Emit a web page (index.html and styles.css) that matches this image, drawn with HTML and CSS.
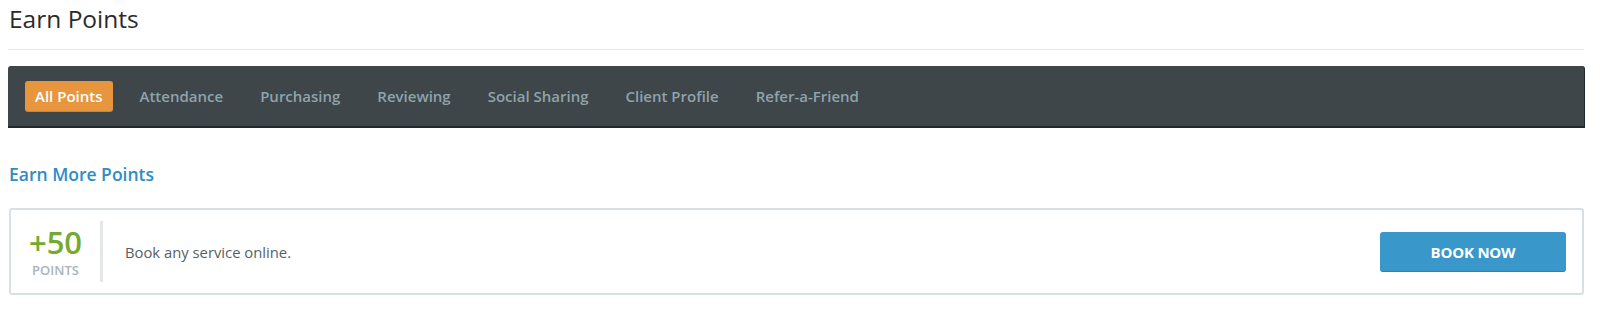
FILE: index.html
```html
<!DOCTYPE html>
<html lang="en">

<head>
  <meta charset="UTF-8">
  <meta name="viewport" content="width=device-width, initial-scale=1.0">
  <title>Earn Points</title>
  <link rel="stylesheet" href="styles.css">
</head>

<body>
  <div class="page">
    <!-- Page heading -->
    <div class="page-header">
      <h1>Earn Points</h1>
    </div>

    <!-- Category filter bar -->
    <div class="filter-bar">
      <a class="filter active" href="#">All Points</a>
      <a class="filter" href="#">Attendance</a>
      <a class="filter" href="#">Purchasing</a>
      <a class="filter" href="#">Reviewing</a>
      <a class="filter" href="#">Social Sharing</a>
      <a class="filter" href="#">Client Profile</a>
      <a class="filter" href="#">Refer-a-Friend</a>
    </div>

    <h2 class="section-title">Earn More Points</h2>

    <!-- One way to earn points -->
    <div class="earn-card">
      <div class="earn-points">
        <span class="amount">+50</span>
        <span class="label">Points</span>
      </div>
      <p class="earn-text">Book any service online.</p>
      <button class="book-now">Book Now</button>
    </div>
  </div>
</body>

</html>
```

FILE: styles.css
```css
/* Base page */
body {
  margin: 0;
  font-family: 'Open Sans', sans-serif;
  background: #fff;
  color: #333;
}

.page {
  padding: 0 16px 0 8px;
}

/* Heading with thin rule under it */
.page-header {
  padding: 6px 0 17px 1px;
  border-bottom: 1px solid #e6e6e6;
}

.page-header h1 {
  margin: 0;
  font-size: 24.5px;
  font-weight: 400;
  line-height: 26px;
  color: #2b2b2b;
}

/* Dark filter bar */
.filter-bar {
  margin-top: 16px;
  display: flex;
  align-items: center;
  gap: 17px;
  height: 60px;
  padding: 0 17px;
  background: #3e4649;
  border-radius: 3px 3px 0 0;
  border-bottom: 2px solid #1f292c;
  box-shadow: 1px 0 0 #1f292c;
  box-sizing: content-box;
}

.filter {
  display: block;
  padding: 0 10px;
  height: 31px;
  line-height: 31px;
  font-size: 15px;
  font-weight: 600;
  color: #8fa3ad;
  text-decoration: none;
  border-radius: 3px;
}

.filter.active {
  background: #e8963e;
  color: #fff;
  box-shadow: inset 0 -1px 0 rgba(0, 0, 0, 0.12);
}

/* Section title */
.section-title {
  margin: 35px 0 0 1px;
  font-size: 17.5px;
  font-weight: 600;
  line-height: 22px;
  color: #2e8dc2;
}

/* Card with points, text and button */
.earn-card {
  margin: 23px 0 0 1px;
  display: flex;
  align-items: center;
  padding: 11px 16px 11px 0;
  border: 2px solid #d9e0e4;
  border-radius: 3px;
}

.earn-points {
  width: 89px;
  height: 61px;
  display: flex;
  flex-direction: column;
  align-items: center;
  justify-content: center;
  border-right: 3px solid #e3e7e9;
}

.amount {
  font-size: 31px;
  font-weight: 600;
  line-height: 32px;
  color: #72ab2e;
}

.label {
  font-size: 13px;
  font-weight: 600;
  line-height: 16px;
  text-transform: uppercase;
  color: #a9b4ba;
  margin-top: 4px;
}

.earn-text {
  flex: 1;
  margin: 0 0 0 22px;
  font-size: 14.8px;
  color: #565f64;
}

.book-now {
  width: 186px;
  height: 40px;
  border: none;
  border-radius: 3px;
  background: #3a97c9;
  box-shadow: inset 0 -1px 0 rgba(0, 0, 0, 0.15);
  color: #fff;
  font-family: 'Open Sans', sans-serif;
  font-size: 15px;
  font-weight: 700;
  text-transform: uppercase;
  letter-spacing: -0.2px;
  cursor: pointer;
}
```
